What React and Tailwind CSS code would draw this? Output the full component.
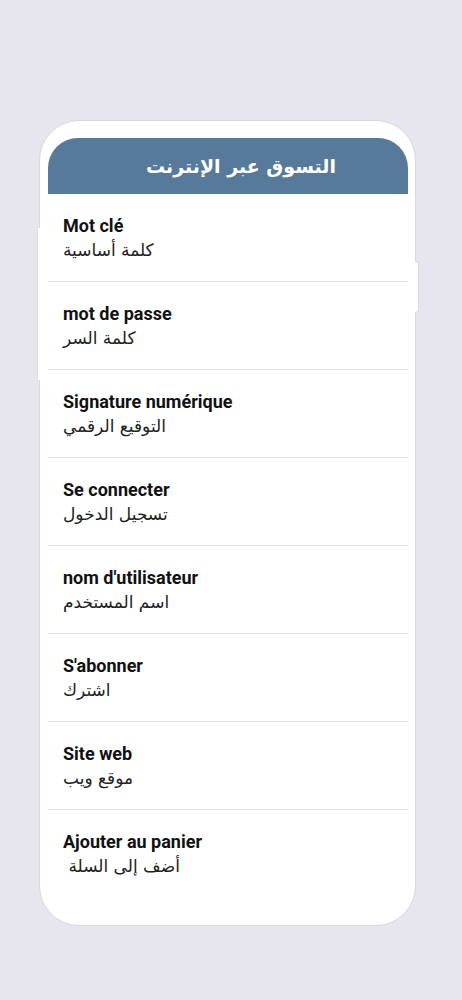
import React from 'react'

const terms = [
  { fr: 'Mot clé', ar: 'كلمة أساسية' },
  { fr: 'mot de passe', ar: 'كلمة السر' },
  { fr: 'Signature numérique', ar: 'التوقيع الرقمي' },
  { fr: 'Se connecter', ar: 'تسجيل الدخول' },
  { fr: "nom d'utilisateur", ar: 'اسم المستخدم' },
  { fr: "S'abonner", ar: 'اشترك' },
  { fr: 'Site web', ar: 'موقع ويب' },
  { fr: 'Ajouter au panier', ar: ' أضف إلى السلة' },
]

const App = () => {
  return (
    <div className="min-h-screen bg-[#e7e6ef] pt-[120px] pl-[39px]" style={{ fontFamily: 'Roboto, "DejaVu Sans", sans-serif' }}>
      <div className="relative w-[377px] h-[806px] bg-white rounded-[40px] border border-[#d9d8e0] pt-[17px] pl-[8px] pr-[7px]">
        {/* side buttons */}
        <div className="absolute -right-[4px] top-[140px] w-[4px] h-[52px] bg-white border border-l-0 border-[#d9d8e0] rounded-r-sm"></div>
        <div className="absolute -left-[3px] top-[106px] w-[3px] h-[154px] bg-white border border-r-0 border-[#dedde4]"></div>

        <div className="h-[56px] bg-[#57799a] rounded-t-[30px] flex items-center justify-center pl-[26px]">
          <span dir="rtl" className="text-white text-[19px] font-bold" style={{ fontFamily: '"DejaVu Sans", sans-serif' }}>
            التسوق عبر الإنترنت
          </span>
        </div>

        <div className="flex flex-col">
          {terms.map((t, i) => (
            <div key={i} className={`h-[88px] pl-[15px] pt-[21px] ${i < terms.length - 1 ? 'border-b border-[#e3e3e6]' : ''}`}>
              <p className="text-[18px] leading-[22px] font-bold text-[#111]">{t.fr}</p>
              <p className="text-[17px] leading-[26px] text-[#222] whitespace-pre" style={{ fontFamily: '"DejaVu Sans", sans-serif' }}>{t.ar}</p>
            </div>
          ))}
        </div>
      </div>
    </div>
  )
}

export default App
